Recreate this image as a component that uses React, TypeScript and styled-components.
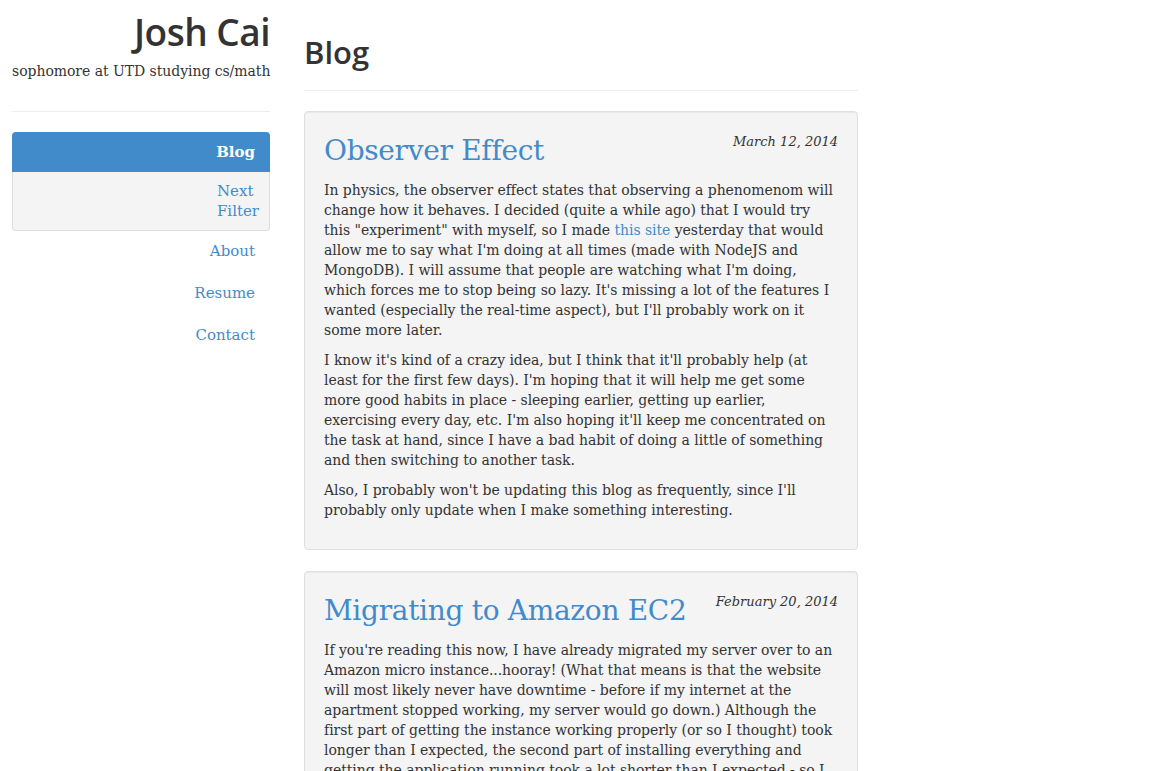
import React from 'react';
import styled, { createGlobalStyle } from 'styled-components';

/**
 *
 *  STYLE
 */
const GlobalStyle = createGlobalStyle`
  html {
    overflow: hidden;
  }
  body {
    margin: 0;
    background: #fff;
    color: #333;
    font-family: 'DejaVu Serif', 'Liberation Serif', serif;
    font-size: 14px;
    line-height: 20px;
  }
  a {
    color: #428bca;
    text-decoration: none;
  }
`;

const Page = styled.div`
  display: grid;
  grid-template-columns: 258px 554px;
  column-gap: 34px;
  padding-left: 12px;
`;

const Sidebar = styled.aside`
  display: flex;
  flex-direction: column;
  text-align: right;
`;

const Name = styled.h1`
  margin: 10px 0 0;
  font-family: 'Open Sans', sans-serif;
  font-weight: 600;
  font-size: 37px;
  line-height: 44px;
  letter-spacing: -0.5px;
  color: #333;
`;

const Tagline = styled.p`
  margin: 7px 0 0;
  font-size: 14px;
  line-height: 20px;
  letter-spacing: -0.05px;
  white-space: nowrap;
`;

const Rule = styled.hr<{ $top: number }>`
  margin: ${(p) => p.$top}px 0 20px;
  border: 0;
  border-top: 1px solid #eee;
`;

const Nav = styled.ul`
  list-style: none;
  margin: 0;
  padding: 0;
  display: flex;
  flex-direction: column;
`;

const NavItem = styled.li`
  & + & {
    margin-top: 2px;
  }
`;

const NavLink = styled.a<{ $active?: boolean }>`
  display: block;
  padding: 10px 15px;
  line-height: 20px;
  font-size: 15px;
  border-radius: 4px;
  ${(p) =>
    p.$active &&
    `
    background: #428bca;
    color: #fff;
    font-weight: bold;
    border-radius: 4px 4px 0 0;
  `}
`;

const SubNav = styled.div`
  padding: 9px 10px;
  background: #f4f4f4;
  border: 1px solid #ddd;
  border-top: 0;
  border-radius: 0 0 4px 4px;
`;

const SubLink = styled.a`
  display: inline-block;
  width: min-content;
  text-align: left;
  font-size: 15px;
`;

const Main = styled.main`
  display: flex;
  flex-direction: column;
`;

const PageTitle = styled.h2`
  margin: 32px 0 0;
  font-family: 'Open Sans', sans-serif;
  font-weight: 600;
  font-size: 31px;
  line-height: 40px;
  color: #333;
`;

const Well = styled.article`
  margin-bottom: 21px;
  padding: 19px;
  background: #f4f4f4;
  border: 1px solid #e0e0e0;
  border-radius: 4px;
  box-shadow: inset 0 1px 1px rgba(0, 0, 0, 0.05);
`;

const PostHead = styled.header`
  display: flex;
  justify-content: space-between;
  align-items: flex-start;
  margin-bottom: 9px;
`;

const PostTitle = styled.h3`
  margin: 0;
  font-weight: normal;
  font-size: 28px;
  line-height: 40px;
  color: #428bca;
  letter-spacing: -0.3px;
`;

const PostDate = styled.time`
  margin-top: 1px;
  font-style: italic;
  font-size: 13px;
  line-height: 20px;
`;

const Para = styled.p`
  margin: 0 0 10px;
  letter-spacing: -0.05px;
`;

/**
 *
 *  DATA
 */
const navItems = ['About', 'Resume', 'Contact'];

/**
 *
 *  FUNCTIONAL COMPONENT
 */
export default function App() {
  return (
    <>
      <GlobalStyle />
      <Page>
        <Sidebar>
          <Name>Josh Cai</Name>
          <Tagline>sophomore at UTD studying cs/math</Tagline>
          <Rule $top={30} />
          <Nav>
            <li>
              <NavLink href="#" $active>
                Blog
              </NavLink>
              <SubNav>
                <SubLink href="#">Next Filter</SubLink>
              </SubNav>
            </li>
            {navItems.map((item) => (
              <NavItem key={item}>
                <NavLink href="#">{item}</NavLink>
              </NavItem>
            ))}
          </Nav>
        </Sidebar>

        <Main>
          <PageTitle>Blog</PageTitle>
          <Rule $top={18} />

          <Well>
            <PostHead>
              <PostTitle>
                <a href="#">Observer Effect</a>
              </PostTitle>
              <PostDate>March 12, 2014</PostDate>
            </PostHead>
            <Para>
              In physics, the observer effect states that observing a phenomenom will change how it
              behaves. I decided (quite a while ago) that I would try this "experiment" with myself,
              so I made <a href="#">this site</a> yesterday that would allow me to say what I'm
              doing at all times (made with NodeJS and MongoDB). I will assume that people are
              watching what I'm doing, which forces me to stop being so lazy. It's missing a lot of
              the features I wanted (especially the real-time aspect), but I'll probably work on it
              some more later.
            </Para>
            <Para>
              I know it's kind of a crazy idea, but I think that it'll probably help (at least for
              the first few days). I'm hoping that it will help me get some more good habits in
              place - sleeping earlier, getting up earlier, exercising every day, etc. I'm also
              hoping it'll keep me concentrated on the task at hand, since I have a bad habit of
              doing a little of something and then switching to another task.
            </Para>
            <Para>
              Also, I probably won't be updating this blog as frequently, since I'll probably only
              update when I make something interesting.
            </Para>
          </Well>

          <Well>
            <PostHead>
              <PostTitle>
                <a href="#">Migrating to Amazon EC2</a>
              </PostTitle>
              <PostDate>February 20, 2014</PostDate>
            </PostHead>
            <Para>
              If you're reading this now, I have already migrated my server over to an Amazon micro
              instance...hooray! (What that means is that the website will most likely never have
              downtime - before if my internet at the apartment stopped working, my server would go
              down.) Although the first part of getting the instance working properly (or so I
              thought) took longer than I expected, the second part of installing everything and
              getting the application running took a lot shorter than I expected - so I ended up
              finishing earlier than I thought I would.
            </Para>
          </Well>
        </Main>
      </Page>
    </>
  );
}
